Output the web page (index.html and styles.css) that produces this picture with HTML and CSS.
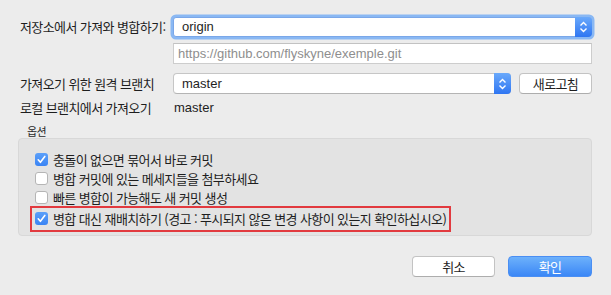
FILE: index.html
```html
<!DOCTYPE html>
<html lang="ko">
<head>
<meta charset="utf-8">
<link rel="stylesheet" href="styles.css">
</head>
<body>
<div class="dialog">
  <div class="row r1">
    <div class="label ko">저장소에서 가져와 병합하기:</div>
    <div class="combo focus">
      <span class="value">origin</span>
      <span class="stepper"><svg width="9" height="12" viewBox="0 0 9 12"><path d="M1.5 4.5 L4.5 1.5 L7.5 4.5 M1.5 7.5 L4.5 10.5 L7.5 7.5" fill="none" stroke="#fff" stroke-width="1.4"/></svg></span>
    </div>
  </div>
  <div class="row r2">
    <div class="label"></div>
    <div class="textfield">https://github.com/flyskyne/exemple.git</div>
  </div>
  <div class="row r3">
    <div class="label ko">가져오기 위한 원격 브랜치</div>
    <div class="popup">
      <span class="value">master</span>
      <span class="stepper"><svg width="9" height="12" viewBox="0 0 9 12"><path d="M1.5 4.5 L4.5 1.5 L7.5 4.5 M1.5 7.5 L4.5 10.5 L7.5 7.5" fill="none" stroke="#fff" stroke-width="1.4"/></svg></span>
    </div>
    <button class="btn refresh ko">새로고침</button>
  </div>
  <div class="row r4">
    <div class="label ko">로컬 브랜치에서 가져오기</div>
    <div class="plain">master</div>
  </div>
  <div class="optlabel ko">옵션</div>
  <div class="group">
    <div class="check-row"><span class="cb on"><svg width="13" height="13" viewBox="0 0 13 13"><path d="M3.2 6.8 L5.4 9.3 L9.8 3.4" fill="none" stroke="#fff" stroke-width="1.6" stroke-linecap="round" stroke-linejoin="round"/></svg></span><span class="ko">충돌이 없으면 묶어서 바로 커밋</span></div>
    <div class="check-row"><span class="cb"></span><span class="ko">병합 커밋에 있는 메세지들을 첨부하세요</span></div>
    <div class="check-row"><span class="cb"></span><span class="ko">빠른 병합이 가능해도 새 커밋 생성</span></div>
    <div class="highlight">
      <div class="check-row"><span class="cb on"><svg width="13" height="13" viewBox="0 0 13 13"><path d="M3.2 6.8 L5.4 9.3 L9.8 3.4" fill="none" stroke="#fff" stroke-width="1.6" stroke-linecap="round" stroke-linejoin="round"/></svg></span><span class="ko">병합 대신 재배치하기 (경고 : 푸시되지 않은 변경 사항이 있는지 확인하십시오)</span></div>
    </div>
  </div>
  <div class="actions">
    <button class="btn cancel ko">취소</button>
    <button class="btn ok ko">확인</button>
  </div>
</div>
</body>
</html>
```

FILE: styles.css
```css
html, body {
  margin: 0;
  padding: 0;
  background: #ececec;
}
body {
  font-family: "Liberation Sans", "Noto Sans CJK KR", sans-serif;
  font-size: 13px;
  color: #1e1e1e;
}
.ko {
  font-family: "Noto Sans CJK KR", "Liberation Sans", sans-serif;
  font-size: 13px;
  letter-spacing: -0.6px;
}
.dialog {
  padding: 17px 19px 0 18px;
  width: 574px;
}
.row {
  display: flex;
  align-items: center;
}
.label {
  width: 155px;
  flex: none;
  padding-left: 2px;
  box-sizing: border-box;
  white-space: nowrap;
  line-height: 16px;
}
.r2 { margin-top: 6px; }
.r3 { margin-top: 9px; }
.r4 { margin-top: 6px; height: 16px; }
.combo, .popup {
  flex: 1;
  display: flex;
  align-items: center;
  background: #fff;
  box-sizing: border-box;
  border-radius: 4px;
  position: relative;
}
.combo {
  height: 20px;
  border: 1px solid #7aa7e9;
  box-shadow: 0 0 0 2.5px #8ab8f3;
  border-radius: 3px;
}
.popup {
  height: 21px;
  border: 1px solid #c6c6c6;
  border-bottom-color: #b4b4b4;
  flex: none;
  width: 338px;
}
.value {
  flex: 1;
  padding-left: 8px;
  line-height: 16px;
}
.stepper {
  flex: none;
  width: 17px;
  align-self: stretch;
  margin: -1px -1px -1px 0;
  background: linear-gradient(#6aa9fb, #2f76f2);
  border-radius: 0 4px 4px 0;
  display: flex;
  align-items: center;
  justify-content: center;
}
.textfield {
  flex: 1;
  height: 21px;
  box-sizing: border-box;
  border: 1px solid #cdcdcd;
  border-top-color: #c2c2c2;
  background: #fff;
  color: #8e8e8e;
  padding-left: 4px;
  line-height: 19px;
}
.btn {
  box-sizing: border-box;
  height: 21px;
  border: 1px solid #c3c3c3;
  border-bottom-color: #adadad;
  border-radius: 4px;
  background: #fff;
  color: #1e1e1e;
  padding: 0;
  line-height: 18px;
  text-align: center;
}
.refresh {
  width: 73px;
  margin-left: 8px;
}
.plain {
  line-height: 16px;
  padding-left: 1px;
}
.optlabel {
  font-size: 11px;
  margin-top: 8px;
  height: 14px;
  line-height: 14px;
  padding-left: 9px;
  color: #2a2a2a;
}
.group {
  background: #e3e3e3;
  border: 1px solid #d8d8d8;
  border-radius: 4px;
  padding: 11px 11px 3px;
  height: 98px;
  box-sizing: border-box;
}
.check-row {
  display: flex;
  align-items: center;
  height: 19px;
  padding-left: 5px;
  white-space: nowrap;
}
.cb {
  flex: none;
  width: 13px;
  height: 13px;
  box-sizing: border-box;
  border: 1px solid #b5b5b5;
  border-radius: 3px;
  background: #fff;
  margin-right: 5px;
  display: flex;
}
.cb.on {
  border: none;
  background: linear-gradient(#5ca0f9, #3a84f4);
}
.highlight {
  width: fit-content;
  border: 2px solid #e23a3f;
  padding: 1px 3px 2px 3px;
  margin-top: -1px;
}
.highlight .check-row {
  padding-left: 0;
}
.actions {
  display: flex;
  justify-content: flex-end;
  gap: 13px;
  margin-top: 20px;
}
.cancel { width: 83px; }
.ok {
  width: 84px;
  border: 1px solid #4a8ef3;
  background: linear-gradient(#6db1fb, #3b87f6);
  color: #fff;
}
```
